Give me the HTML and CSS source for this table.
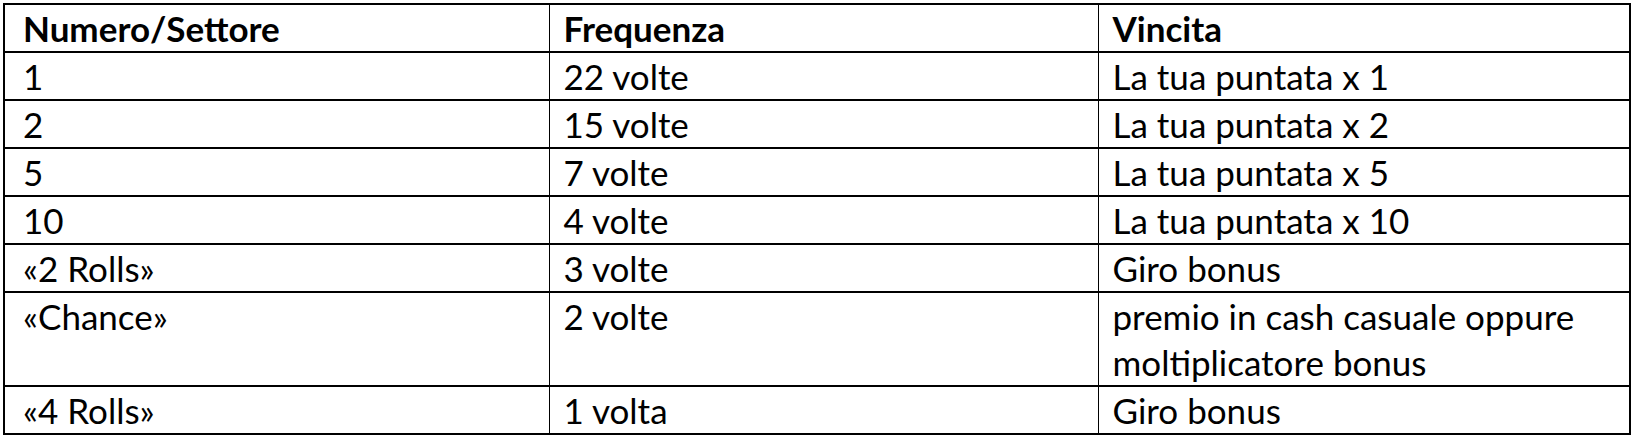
FILE: index.html
```html
<!DOCTYPE html>
<html lang="it">
<head>
<meta charset="utf-8">
<title>Tabella vincite</title>
<link rel="stylesheet" href="styles.css">
</head>
<body>
<table class="payout">
  <colgroup>
    <col class="c1"><col class="c2"><col class="c3">
  </colgroup>
  <thead>
    <tr><th>Numero/Settore</th><th>Frequenza</th><th>Vincita</th></tr>
  </thead>
  <tbody>
    <tr><td>1</td><td>22 volte</td><td>La tua puntata x 1</td></tr>
    <tr><td>2</td><td>15 volte</td><td>La tua puntata x 2</td></tr>
    <tr><td>5</td><td>7 volte</td><td>La tua puntata x 5</td></tr>
    <tr><td>10</td><td>4 volte</td><td>La tua puntata x 10</td></tr>
    <tr><td>«2 Rolls»</td><td>3 volte</td><td>Giro bonus</td></tr>
    <tr><td>«Chance»</td><td>2 volte</td><td>premio in cash casuale oppure<br>moltiplicatore bonus</td></tr>
    <tr><td>«4 Rolls»</td><td>1 volta</td><td>Giro bonus</td></tr>
  </tbody>
</table>
</body>
</html>
```

FILE: styles.css
```css
html, body {
  margin: 0;
  padding: 0;
  background: #ffffff;
}

body {
  padding: 3px 0 0 3px;
  font-family: Lato, "Open Sans", "Liberation Sans", sans-serif;
  color: #000000;
}

.payout {
  border-collapse: collapse;
  table-layout: fixed;
  width: 1626px;
  font-size: 35px;
  line-height: 46px;
}

.payout .c1 {
  width: 545px;
}

.payout .c2 {
  width: 549px;
}

.payout .c3 {
  width: 532px;
}

.payout th,
.payout td {
  border-top: 2px solid #000;
  border-bottom: 2px solid #000;
  border-left: 1px solid #000;
  border-right: 1px solid #000;
  padding: 0 12px 0 14px;
  text-align: left;
  vertical-align: top;
  font-weight: 400;
}

.payout th {
  font-weight: 700;
}

.payout th:first-child,
.payout td:first-child {
  border-left-width: 2px;
  padding-left: 18px;
}

.payout th:last-child,
.payout td:last-child {
  border-right-width: 2px;
}
```
